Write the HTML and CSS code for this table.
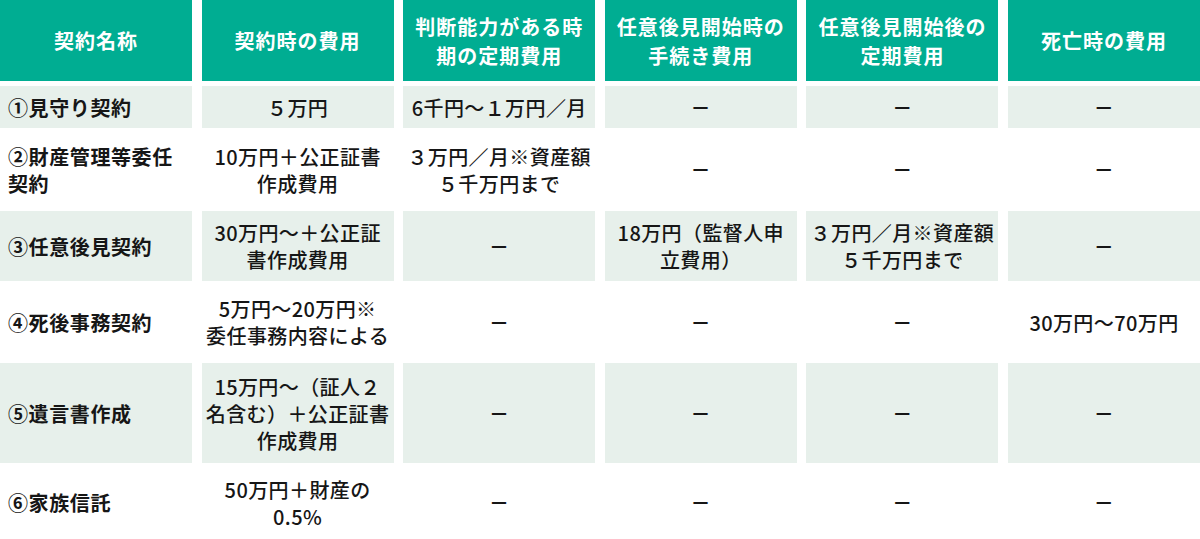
FILE: index.html
```html
<!DOCTYPE html>
<html lang="ja">
<head>
<meta charset="utf-8">
<title>費用一覧</title>
<link rel="stylesheet" href="styles.css">
</head>
<body>
<div class="table">
  <div class="cell head">契約名称</div>
  <div class="cell head">契約時の費用</div>
  <div class="cell head">判断能力がある時<br>期の定期費用</div>
  <div class="cell head">任意後見開始時の<br>手続き費用</div>
  <div class="cell head">任意後見開始後の<br>定期費用</div>
  <div class="cell head">死亡時の費用</div>

  <div class="cell name tint">①見守り契約</div>
  <div class="cell tint">５万円</div>
  <div class="cell tint">6千円～１万円／月</div>
  <div class="cell tint dash">－</div>
  <div class="cell tint dash">－</div>
  <div class="cell tint dash">－</div>

  <div class="cell name">②財産管理等委任<br>契約</div>
  <div class="cell">10万円＋公正証書<br>作成費用</div>
  <div class="cell">３万円／月※資産額<br>５千万円まで</div>
  <div class="cell dash">－</div>
  <div class="cell dash">－</div>
  <div class="cell dash">－</div>

  <div class="cell name tint">③任意後見契約</div>
  <div class="cell tint">30万円～＋公正証<br>書作成費用</div>
  <div class="cell tint dash">－</div>
  <div class="cell tint">18万円（監督人申<br>立費用）</div>
  <div class="cell tint">３万円／月※資産額<br>５千万円まで</div>
  <div class="cell tint dash">－</div>

  <div class="cell name">④死後事務契約</div>
  <div class="cell">5万円～20万円※<br>委任事務内容による</div>
  <div class="cell dash">－</div>
  <div class="cell dash">－</div>
  <div class="cell dash">－</div>
  <div class="cell">30万円～70万円</div>

  <div class="cell name tint">⑤遺言書作成</div>
  <div class="cell tint">15万円～（証人２<br>名含む）＋公正証書<br>作成費用</div>
  <div class="cell tint dash">－</div>
  <div class="cell tint dash">－</div>
  <div class="cell tint dash">－</div>
  <div class="cell tint dash">－</div>

  <div class="cell name">⑥家族信託</div>
  <div class="cell">50万円＋財産の<br>0.5%</div>
  <div class="cell dash">－</div>
  <div class="cell dash">－</div>
  <div class="cell dash">－</div>
  <div class="cell dash">－</div>
</div>
</body>
</html>
```

FILE: styles.css
```css
html, body {
  margin: 0;
  padding: 0;
  background: #ffffff;
}

body {
  font-family: "Noto Sans CJK JP", "Noto Sans", sans-serif;
  color: #161616;
}

.table {
  display: grid;
  width: 1200px;
  grid-template-columns: repeat(6, 1fr);
  grid-template-rows: 81px 42px 73px 70px 72px 100px 69px;
  column-gap: 9.6px;
  row-gap: 5px;
}

.cell {
  display: flex;
  align-items: center;
  justify-content: center;
  text-align: center;
  font-size: 20px;
  font-weight: 500;
  line-height: 27px;
  letter-spacing: 0.4px;
  white-space: nowrap;
  padding: 0 4px;
  overflow: hidden;
}

.head {
  background: #00ad92;
  color: #ffffff;
  font-weight: 700;
  letter-spacing: 1px;
  line-height: 29px;
}

.tint {
  background: #e7f0eb;
}

.name {
  justify-content: flex-start;
  text-align: left;
  padding-left: 8px;
  font-weight: 700;
  letter-spacing: 0.6px;
}

.dash {
  font-weight: 700;
}
```
